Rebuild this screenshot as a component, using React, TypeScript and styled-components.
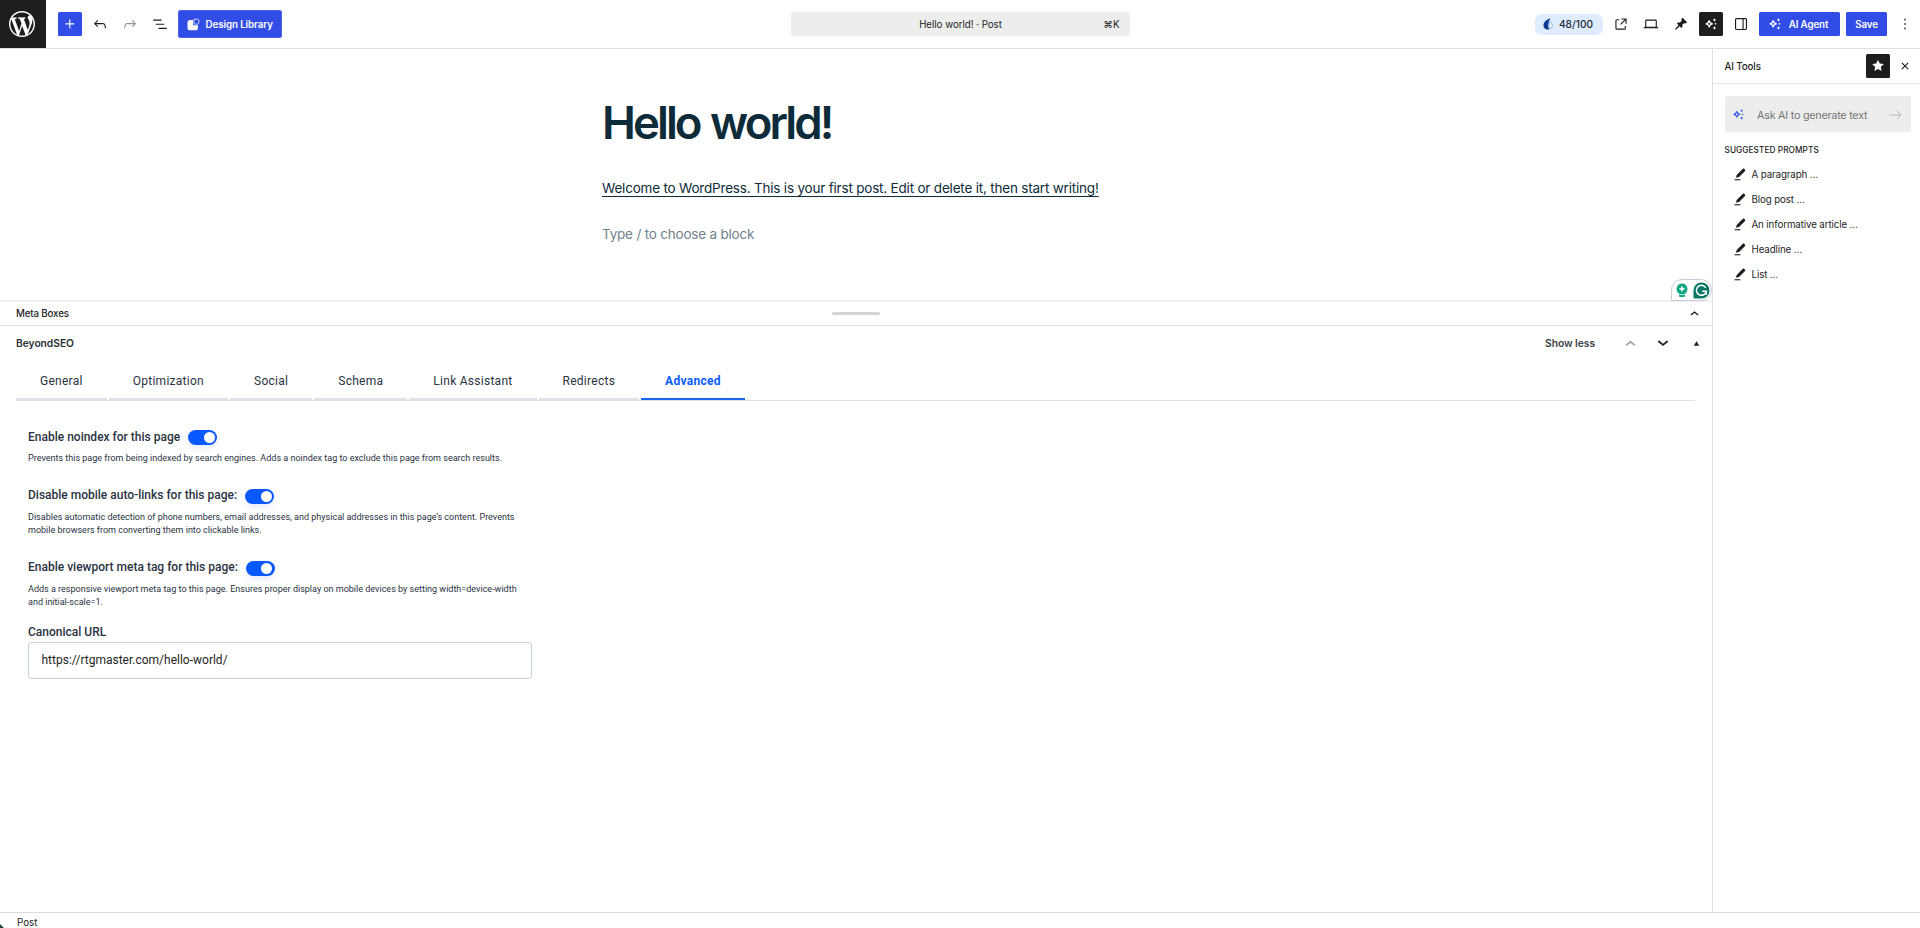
import React from "react";
import styled, { createGlobalStyle, css } from "styled-components";

const UI = `Inter, "Liberation Sans", sans-serif`;
const FORM = `Roboto, "Liberation Sans", sans-serif`;

const GlobalStyle = createGlobalStyle`
  *, *::before, *::after { box-sizing: border-box; }
  body { margin: 0; background: #fff; color: #1e1e1e; font-family: ${UI}; overflow: hidden; }
  button, input { font: inherit; color: inherit; border: 0; margin: 0; padding: 0; background: none; letter-spacing: inherit; }
  svg { display: block; flex: none; }
`;

/* ---------- icons ---------- */

const paths = {
  plus: "M11 12.5V17.5H12.5V12.5H17.5V11H12.5V6H11V11H6V12.5H11Z",
  undo: "M18.3 11.7c-.6-.6-1.4-.9-2.3-.9H6.7l2.9-3.3-1.1-1-4.5 5L8.5 16l1-1-2.7-2.7H16c.5 0 .9.2 1.3.5 1 1 1 3.4 1 4.5v.3h1.5v-.2c0-1.5 0-4.3-1.5-5.7z",
  redo: "M15.6 6.5l-1.1 1 2.9 3.3H8c-.9 0-1.7.3-2.3.9-1.4 1.5-1.4 4.2-1.4 5.6v.2h1.5v-.3c0-1.1 0-3.5 1-4.5.3-.3.7-.5 1.3-.5h9.2L14.5 15l1.1 1.1 4.6-4.6-4.6-5z",
  outline: "M3 6h11v1.5H3V6Zm3.5 5.5h11V13h-11v-1.5ZM21 17H10v1.5h11V17Z",
  external: "M19.5 4.5h-7V6h4.44l-5.97 5.97 1.06 1.06L18 7.06v4.44h1.5v-7Zm-13 1a2 2 0 0 0-2 2v10a2 2 0 0 0 2 2h10a2 2 0 0 0 2-2v-3H17v3a.5.5 0 0 1-.5.5h-10a.5.5 0 0 1-.5-.5v-10a.5.5 0 0 1 .5-.5h3V5.5h-3Z",
  desktop: "M20.5 16h-.7V8c0-1.1-.9-2-2-2H6.2c-1.1 0-2 .9-2 2v8h-.7c-.8 0-1.5.7-1.5 1.5h20c0-.8-.7-1.5-1.5-1.5zM5.7 8c0-.3.2-.5.5-.5h11.6c.3 0 .5.2.5.5v7.6H5.7V8z",
  drawer: "M18 4H6c-1.1 0-2 .9-2 2v12c0 1.1.9 2 2 2h12c1.1 0 2-.9 2-2V6c0-1.1-.9-2-2-2zm-4 14.5H6c-.3 0-.5-.2-.5-.5V6c0-.3.2-.5.5-.5h8v13zm4.5-.5c0 .3-.2.5-.5.5h-2.5v-13H18c.3 0 .5.2.5.5v12z",
  more: "M13 19h-2v-2h2v2zm0-6h-2v-2h2v2zm0-6h-2V5h2v2z",
  close: "M12 13.06l3.712 3.713 1.061-1.06L13.061 12l3.712-3.712-1.06-1.06L12 10.938 8.288 7.227l-1.061 1.06L10.939 12l-3.712 3.712 1.06 1.061L12 13.061z",
  star: "M11.776 4.454a.25.25 0 01.448 0l2.069 4.192a.25.25 0 00.188.137l4.626.672a.25.25 0 01.139.426l-3.348 3.263a.25.25 0 00-.072.222l.79 4.607a.25.25 0 01-.362.263l-4.138-2.175a.25.25 0 00-.232 0l-4.138 2.175a.25.25 0 01-.363-.263l.79-4.607a.25.25 0 00-.071-.222L4.754 9.881a.25.25 0 01.139-.426l4.626-.672a.25.25 0 00.188-.137l2.069-4.192z",
  up: "M6.3 13.3L12 8.7l5.700 4.600-1.200 1.600L12 11.300l-4.500 3.600-1.200-1.600z",
  triangle: "M6 17l6-10 6 10z",
};

type IconName = keyof typeof paths;

const Icon = ({ name, size = 18 }: { name: IconName; size?: number }) => (
  <svg width={size} height={size} viewBox="0 0 24 24" fill="currentColor">
    <path d={paths[name]} />
  </svg>
);

const WordPressLogo = () => (
  <svg width="26" height="26" viewBox="0 0 20 20" fill="#fff">
    <path d="M20 10c0-5.51-4.49-10-10-10C4.48 0 0 4.49 0 10c0 5.52 4.48 10 10 10 5.51 0 10-4.48 10-10zM7.78 15.37L4.37 6.22c.55-.02 1.17-.08 1.17-.08.5-.06.44-1.13-.06-1.11 0 0-1.45.11-2.37.11-.18 0-.37 0-.58-.01C4.12 2.69 6.87 1.11 10 1.11c2.33 0 4.45.87 6.05 2.34-.68-.11-1.65.39-1.65 1.58 0 .74.45 1.36.9 2.1.35.61.55 1.36.55 2.46 0 1.49-1.4 5-1.4 5l-3.03-8.37c.54-.02.82-.17.82-.17.5-.05.44-1.25-.06-1.22 0 0-1.44.12-2.38.12-.87 0-2.33-.12-2.33-.12-.5-.03-.56 1.2-.06 1.22l.92.08 1.26 3.41zM17.41 10c.24-.64.74-1.87.43-4.25.7 1.29 1.05 2.71 1.05 4.25 0 3.29-1.73 6.24-4.4 7.78.97-2.59 1.94-5.2 2.92-7.78zM6.1 18.09C3.12 16.65 1.11 13.53 1.11 10c0-1.3.23-2.48.72-3.59C3.25 10.3 4.67 14.2 6.1 18.09zm4.03-6.63l2.58 6.98c-.86.29-1.76.45-2.71.45-.79 0-1.57-.11-2.29-.33.81-2.38 1.62-4.74 2.42-7.1z" />
  </svg>
);

const PinIcon = () => (
  <svg width="14" height="14" viewBox="0 0 20 20" fill="currentColor">
    <path d="M10.44 3.02l1.82-1.82 6.36 6.35-1.83 1.82c-1.05-.68-2.48-.57-3.41.36l-.75.75c-.92.93-1.04 2.35-.35 3.41l-1.83 1.82-2.41-2.41-2.8 2.79c-.42.42-3.38 2.71-3.8 2.29s1.86-3.39 2.28-3.81l2.79-2.79L4.1 9.36l1.83-1.82c1.05.69 2.48.57 3.4-.36l.75-.75c.93-.92 1.05-2.35.36-3.41z" />
  </svg>
);

const SparkleIcon = ({ size = 12 }: { size?: number }) => (
  <svg width={size} height={size} viewBox="0 0 16 16" fill="currentColor">
    <path
      d="M5.600 3.600C6.100 6.300 7.100 7.300 9.800 7.800 7.100 8.300 6.100 9.300 5.600 12 5.100 9.300 4.100 8.300 1.400 7.800 4.100 7.300 5.100 6.300 5.600 3.600Z"
      fill="none"
      stroke="currentColor"
      strokeWidth="1.7"
      strokeLinejoin="round"
    />
    <path d="M12.600.2l.8 1.500 1.500.8-1.500.8-.8 1.500-.8-1.500-1.500-.8 1.500-.8zM14 6.100l.6 1.100 1.100.6-1.100.6-.6 1.100-.6-1.100-1.100-.6 1.100-.6zM12.600 10.900l.8 1.500 1.500.8-1.500.8-.8 1.500-.8-1.500-1.500-.8 1.500-.8z" />
  </svg>
);

const LibraryIcon = () => (
  <svg width="13" height="13" viewBox="0 0 13 13">
    <path d="M3.200 2H6v3.700C6 6.800 6.400 7.200 7.500 7.200h3.500v2.700c0 1.500-.9 2.400-2.400 2.400H3C1.400 12.300.5 11.400.5 9.900V4.500C.5 2.900 1.500 2 3.200 2z" fill="#fff" />
    <path d="M6.900 1.200h3.300c1.100 0 1.700.6 1.700 1.600v1.600c0 1-.7 1.700-1.700 1.700H8.100C7.300 6.100 6.900 5.700 6.900 5z" fill="none" stroke="#dfe5ff" strokeWidth=".9" />
  </svg>
);

const ScoreIcon = () => (
  <svg width="10" height="12" viewBox="0 0 10 12">
    <path d="M7.600.6C3.400 1.300.5 4.300.5 7.500c0 2.300 1.600 4 3.900 4 .9 0 1.500-.2 2-.6C5.200 9.900 5 8 5.400 5.800 5.700 3.700 6.500 2 7.600.6z" fill="#0b3a8f" />
    <path d="M7.300 3.400C8.900 5.200 9.600 7 9.300 8.600c-.3 1.400-1.300 2.200-2.600 2.200C5.700 9.300 5.700 6 7.300 3.400z" fill="#e6effd" stroke="#7f9dd8" strokeWidth=".7" />
  </svg>
);

const PencilIcon = () => (
  <svg width="12" height="13" viewBox="0 0 12 13" fill="currentColor">
    <path d="M8.600 1c.6-.6 1.200-.6 1.700-.1l.6.6c.5.500.5 1.100-.1 1.700L5 9 1.900 9.800 2.700 6.900z" />
    <path d="M.6 11.200h5.800v1.100H.6z" />
  </svg>
);

const ArrowIcon = () => (
  <svg width="13" height="10" viewBox="0 0 13 10" fill="none" stroke="currentColor" strokeWidth="1">
    <path d="M.5 5h11.500M8 1l4 4-4 4" />
  </svg>
);

const BulbIcon = () => (
  <svg width="12" height="15" viewBox="0 0 12 15">
    <path d="M6 .5a5.400 5.400 0 0 0-3 9.900V11h6v-.6A5.400 5.400 0 0 0 6 .5z" fill="#11a683" />
    <path d="M3 11.700h6v1c0 .7-.5 1.300-1.300 1.300H4.300C3.500 14 3 13.400 3 12.700z" fill="#11a683" />
    <path d="M6 3.200l.8 1.900 1.900.8-1.900.8L6 8.600l-.8-1.900-1.900-.8 1.900-.8z" fill="#fff" stroke="#fff" strokeWidth=".5" />
  </svg>
);

const GrammarIcon = () => (
  <svg width="17" height="17" viewBox="0 0 17 17">
    <path d="M8.500.5a8 8 0 1 1 0 16H1.300C.8 16.500.5 16.200.5 15.700V8.500a8 8 0 0 1 8-8z" fill="#0b7566" />
    <path d="M12.300 5.200A5 5 0 1 0 13.300 9.300H9.800M13.300 9.300V12.300" fill="none" stroke="#fff" strokeWidth="1.5" strokeLinecap="round" />
  </svg>
);

/* ---------- frame ---------- */

const Page = styled.div`
  height: 928px;
  display: grid;
  grid-template-rows: 49px 1fr 16px;
  position: relative;
`;

const Header = styled.header`
  display: grid;
  grid-template-columns: 1fr 339px 1fr;
  align-items: start;
  border-bottom: 1px solid #dfdfdf;
  font-size: 9.75px;
`;

const HeaderLeft = styled.div`
  display: flex;
  align-items: center;
  height: 48px;
`;

const HeaderRight = styled(HeaderLeft)`
  justify-content: flex-end;
  gap: 6px;
  padding-right: 3px;
`;

const LogoBox = styled.div`
  width: 46px;
  height: 48px;
  padding-right: 2px;
  margin-right: 12px;
  background: #1e1e1e;
  display: flex;
  align-items: center;
  justify-content: center;
`;

const ToolButton = styled.button<{ $tone?: "primary" | "dark" | "muted" }>`
  width: 24px;
  height: 24px;
  flex: none;
  border-radius: 1.5px;
  display: flex;
  align-items: center;
  justify-content: center;
  ${(p) => p.$tone === "primary" && css`background: #324de6; color: #fff;`}
  ${(p) => p.$tone === "dark" && css`background: #1e1e1e; color: #fff;`}
  ${(p) => p.$tone === "muted" && css`color: #949494;`}
`;

const ToolGroup = styled.div`
  display: flex;
  gap: 6px;
`;

const LibraryButton = styled.button`
  width: 104px;
  height: 28px;
  margin-left: 6px;
  padding-left: 8px;
  display: flex;
  align-items: center;
  gap: 5.5px;
  background: #324de6;
  border: 1px solid #5068ee;
  border-radius: 2px;
  color: #fff;
  font-weight: 600;
  font-size: 9.75px;
  letter-spacing: -0.08px;
  white-space: nowrap;
`;

const CommandBar = styled.div`
  height: 24px;
  margin-top: 12px;
  padding: 0 10px;
  background: #ededed;
  border-radius: 3px;
  display: grid;
  grid-template-columns: 41px 1fr 40px;
  align-items: center;
  text-align: center;
  letter-spacing: -0.04px;
`;

const Shortcut = styled.span`
  text-align: right;
`;

const ScorePill = styled.div`
  width: 68px;
  height: 21px;
  padding-left: 8px;
  display: flex;
  align-items: center;
  gap: 6px;
  border-radius: 7px;
  background: #dfebfe;
  font-size: 10.1px;
  font-weight: 500;
  color: #1f2a3a;
`;

const PrimaryButton = styled.button<{ $width: number }>`
  width: ${(p) => p.$width}px;
  height: 24px;
  display: flex;
  align-items: center;
  justify-content: center;
  gap: 8px;
  background: #324de6;
  border-radius: 1.5px;
  color: #fff;
  font-weight: 600;
  letter-spacing: -0.1px;
`;

const AgentButton = styled(PrimaryButton)`
  padding-right: 2px;
`;

const Body = styled.div`
  display: grid;
  grid-template-columns: 1fr 208px;
  min-height: 0;
`;

const Main = styled.main`
  display: flex;
  flex-direction: column;
  min-width: 0;
`;

const Footer = styled.footer`
  border-top: 1px solid #dcdcdc;
  padding: 4px 0 0 17px;
  font-size: 9.75px;
  line-height: 12px;
`;

const Corner = styled.svg`
  position: absolute;
  left: 0;
  bottom: 0;
`;

/* ---------- editor canvas ---------- */

const Canvas = styled.section`
  position: relative;
  height: 251px;
  padding: 44px 0 0 602px;
  color: #0d2b38;
`;

const Title = styled.h1`
  margin: 0;
  font-size: 45.5px;
  line-height: 60px;
  font-weight: 600;
  letter-spacing: -2.95px;
  word-spacing: 2px;
`;

const Paragraph = styled.p<{ $placeholder?: boolean }>`
  margin: ${(p) => (p.$placeholder ? 26 : 25)}px 0 0;
  font-size: 13.5px;
  line-height: 20px;
  letter-spacing: -0.2px;
  color: ${(p) => (p.$placeholder ? "#6f828b" : "#0d2b38")};
  ${(p) => !p.$placeholder && css`text-decoration: underline; text-underline-offset: 3px; text-decoration-thickness: 1px;`}
`;

const WritingBadge = styled.div`
  position: absolute;
  right: 0;
  bottom: -1px;
  width: 41px;
  height: 22px;
  padding: 0 1px 0 4px;
  display: flex;
  align-items: center;
  justify-content: space-between;
  background: #fff;
  border: 1px solid #c9cbdc;
  border-radius: 11px 11px 11px 0;
`;

/* ---------- meta boxes ---------- */

const MetaBar = styled.div`
  height: 26px;
  padding: 0 17px 0 16px;
  border-top: 2px solid #f0f0f0;
  border-bottom: 1px solid #dfdfdf;
  display: grid;
  grid-template-columns: 1fr 48px 1fr;
  align-items: center;
  font-size: 9.75px;
  font-weight: 500;
  letter-spacing: -0.16px;
`;

const Handle = styled.span`
  height: 3px;
  border-radius: 2px;
  background: #d5d5d5;
`;

const MetaToggle = styled.span`
  justify-self: end;
  margin-right: -8px;
`;

const BoxHeader = styled.div`
  height: 33px;
  padding: 1px 7px 0 16px;
  display: flex;
  align-items: center;
  justify-content: space-between;
  color: #2c3338;
  font-size: 10.3px;
  font-weight: 600;
  letter-spacing: -0.05px;
`;

const BoxActions = styled.div`
  display: flex;
  align-items: center;
  color: #1e1e1e;
`;

const ShowLess = styled.span`
  margin-right: 26px;
  color: #3c434a;
`;

const BoxArrow = styled.span<{ $muted?: boolean; $flip?: boolean; $gap?: number }>`
  width: 18px;
  margin-right: ${(p) => p.$gap ?? 0}px;
  display: flex;
  justify-content: center;
  color: ${(p) => (p.$muted ? "#a7aaad" : "#1e1e1e")};
  transform: ${(p) => (p.$flip ? "rotate(180deg)" : "none")};
`;

const Tabs = styled.nav`
  margin: 1px 17px 0 16px;
  height: 41px;
  display: flex;
  gap: 2px;
  border-bottom: 1px solid #dfe1e4;
`;

const Tab = styled.button<{ $active?: boolean }>`
  padding: 4px 24px 0;
  height: 40px;
  border-bottom: 2px solid ${(p) => (p.$active ? "#1d63f5" : "#dee2e8")};
  color: ${(p) => (p.$active ? "#0b5cff" : "#2a3342")};
  font-family: ${FORM};
  font-size: 12px;
  font-weight: ${(p) => (p.$active ? 700 : 400)};
  letter-spacing: 0.27px;
  white-space: nowrap;
`;

const Form = styled.div`
  width: 504px;
  margin-left: 28px;
  padding-top: 26px;
  font-family: ${FORM};
  color: #2a3342;
`;

const Setting = styled.div`
  margin-bottom: 20px;
  &:last-of-type { margin-bottom: 13px; }
`;

const SettingHead = styled.div`
  display: flex;
  align-items: center;
  gap: 8px;
  height: 19px;
`;

const Label = styled.label`
  display: block;
  font-size: 12px;
  font-weight: 500;
  line-height: 18px;
`;

const Switch = styled.span`
  width: 29px;
  height: 15px;
  margin-top: 2px;
  padding: 2px 2.5px;
  display: flex;
  justify-content: flex-end;
  border-radius: 8px;
  background: #0a58ff;
  box-shadow: 0 3px 6px rgba(60, 100, 220, 0.13);
  &::after {
    content: "";
    width: 11px;
    height: 11px;
    border-radius: 50%;
    background: #fff;
  }
`;

const Description = styled.p`
  margin: 6px 0 0;
  font-size: 9.02px;
  line-height: 13.5px;
  white-space: pre;
`;

const UrlInput = styled.input`
  display: block;
  width: 504px;
  height: 37px;
  margin-top: 1.5px;
  padding: 0 12.5px 1px;
  border: 1px solid #c6cfde;
  border-radius: 3px;
  color: #1e1e1e;
  font-size: 12px;
`;

/* ---------- sidebar ---------- */

const Sidebar = styled.aside`
  border-left: 1px solid #dfdfdf;
  font-size: 9.75px;
  letter-spacing: -0.12px;
`;

const SidebarHeader = styled.div`
  height: 35px;
  padding: 0 6px 0 11.5px;
  display: flex;
  align-items: center;
  border-bottom: 1px solid #e2e2e2;
  font-weight: 500;
`;

const SidebarTitle = styled.span`
  flex: 1;
`;

const CloseButton = styled(ToolButton)`
  width: 18px;
  margin-left: 6px;
`;

const SidebarBody = styled.div`
  padding: 12px 9px 0 11.5px;
`;

const PromptBox = styled.div`
  height: 36px;
  padding: 1px 9px 0 8px;
  display: flex;
  align-items: center;
  background: #ededed;
  border-radius: 1.5px;
  color: #3858e9;
`;

const PromptPlaceholder = styled.span`
  flex: 1;
  margin-left: 13.5px;
  padding-top: 1px;
  color: #757575;
  font-size: 10.8px;
  letter-spacing: -0.25px;
  white-space: nowrap;
`;

const PromptArrow = styled.span`
  padding-top: 1px;
  color: #b5b5b5;
`;

const PromptHeading = styled.h2`
  margin: 12px 0 5.5px;
  font-size: 8.25px;
  line-height: 12px;
  font-weight: 500;
  letter-spacing: 0.07px;
  text-transform: uppercase;
`;

const PromptItem = styled.div`
  height: 25.1px;
  padding-left: 9px;
  display: flex;
  align-items: center;
  gap: 6px;
`;

const tabs = ["General", "Optimization", "Social", "Schema", "Link Assistant", "Redirects", "Advanced"];

const settings = [
  {
    label: "Enable noindex for this page",
    text: "Prevents this page from being indexed by search engines. Adds a noindex tag to exclude this page from search results.",
  },
  {
    label: "Disable mobile auto-links for this page:",
    text: "Disables automatic detection of phone numbers, email addresses, and physical addresses in this page’s content. Prevents\nmobile browsers from converting them into clickable links.",
  },
  {
    label: "Enable viewport meta tag for this page:",
    text: "Adds a responsive viewport meta tag to this page. Ensures proper display on mobile devices by setting width=device-width\nand initial-scale=1.",
  },
];

const prompts = ["A paragraph ...", "Blog post ...", "An informative article ...", "Headline ...", "List ..."];

export default function App() {
  return (
    <Page>
      <GlobalStyle />
      <Header>
        <HeaderLeft>
          <LogoBox><WordPressLogo /></LogoBox>
          <ToolGroup>
            <ToolButton $tone="primary"><Icon name="plus" /></ToolButton>
            <ToolButton><Icon name="undo" /></ToolButton>
            <ToolButton $tone="muted"><Icon name="redo" /></ToolButton>
            <ToolButton><Icon name="outline" /></ToolButton>
          </ToolGroup>
          <LibraryButton><LibraryIcon />Design Library</LibraryButton>
        </HeaderLeft>
        <CommandBar>
          <span />
          <span>Hello world! · Post</span>
          <Shortcut>⌘K</Shortcut>
        </CommandBar>
        <HeaderRight>
          <ScorePill><ScoreIcon />48/100</ScorePill>
          <ToolButton><Icon name="external" /></ToolButton>
          <ToolButton><Icon name="desktop" /></ToolButton>
          <ToolButton><PinIcon /></ToolButton>
          <ToolButton $tone="dark"><SparkleIcon /></ToolButton>
          <ToolButton><Icon name="drawer" /></ToolButton>
          <AgentButton $width={81}><SparkleIcon />AI Agent</AgentButton>
          <PrimaryButton $width={41}>Save</PrimaryButton>
          <ToolButton><Icon name="more" /></ToolButton>
        </HeaderRight>
      </Header>

      <Body>
        <Main>
          <Canvas>
            <Title>Hello world!</Title>
            <Paragraph>Welcome to WordPress. This is your first post. Edit or delete it, then start writing!</Paragraph>
            <Paragraph $placeholder>Type / to choose a block</Paragraph>
            <WritingBadge><BulbIcon /><GrammarIcon /></WritingBadge>
          </Canvas>
          <MetaBar>
            <span>Meta Boxes</span>
            <Handle />
            <MetaToggle><Icon name="up" size={17} /></MetaToggle>
          </MetaBar>
          <BoxHeader>
            <span>BeyondSEO</span>
            <BoxActions>
              <ShowLess>Show less</ShowLess>
              <BoxArrow $muted $gap={15}><Icon name="up" size={21} /></BoxArrow>
              <BoxArrow $flip $gap={15}><Icon name="up" size={22} /></BoxArrow>
              <BoxArrow><Icon name="triangle" size={11} /></BoxArrow>
            </BoxActions>
          </BoxHeader>
          <Tabs>
            {tabs.map((t) => <Tab key={t} $active={t === "Advanced"}>{t}</Tab>)}
          </Tabs>
          <Form>
            {settings.map((s) => (
              <Setting key={s.label}>
                <SettingHead><Label>{s.label}</Label><Switch /></SettingHead>
                <Description>{s.text}</Description>
              </Setting>
            ))}
            <Label>Canonical URL</Label>
            <UrlInput defaultValue="https://rtgmaster.com/hello-world/" />
          </Form>
        </Main>

        <Sidebar>
          <SidebarHeader>
            <SidebarTitle>AI Tools</SidebarTitle>
            <ToolButton $tone="dark"><Icon name="star" /></ToolButton>
            <CloseButton><Icon name="close" /></CloseButton>
          </SidebarHeader>
          <SidebarBody>
            <PromptBox>
              <SparkleIcon size={11} />
              <PromptPlaceholder>Ask AI to generate text</PromptPlaceholder>
              <PromptArrow><ArrowIcon /></PromptArrow>
            </PromptBox>
            <PromptHeading>Suggested prompts</PromptHeading>
            {prompts.map((p) => <PromptItem key={p}><PencilIcon />{p}</PromptItem>)}
          </SidebarBody>
        </Sidebar>
      </Body>

      <Footer>Post</Footer>
      <Corner width="4" height="4" viewBox="0 0 4 4"><path d="M0 0v4h4z" fill="#1f4a44" /></Corner>
    </Page>
  );
}
